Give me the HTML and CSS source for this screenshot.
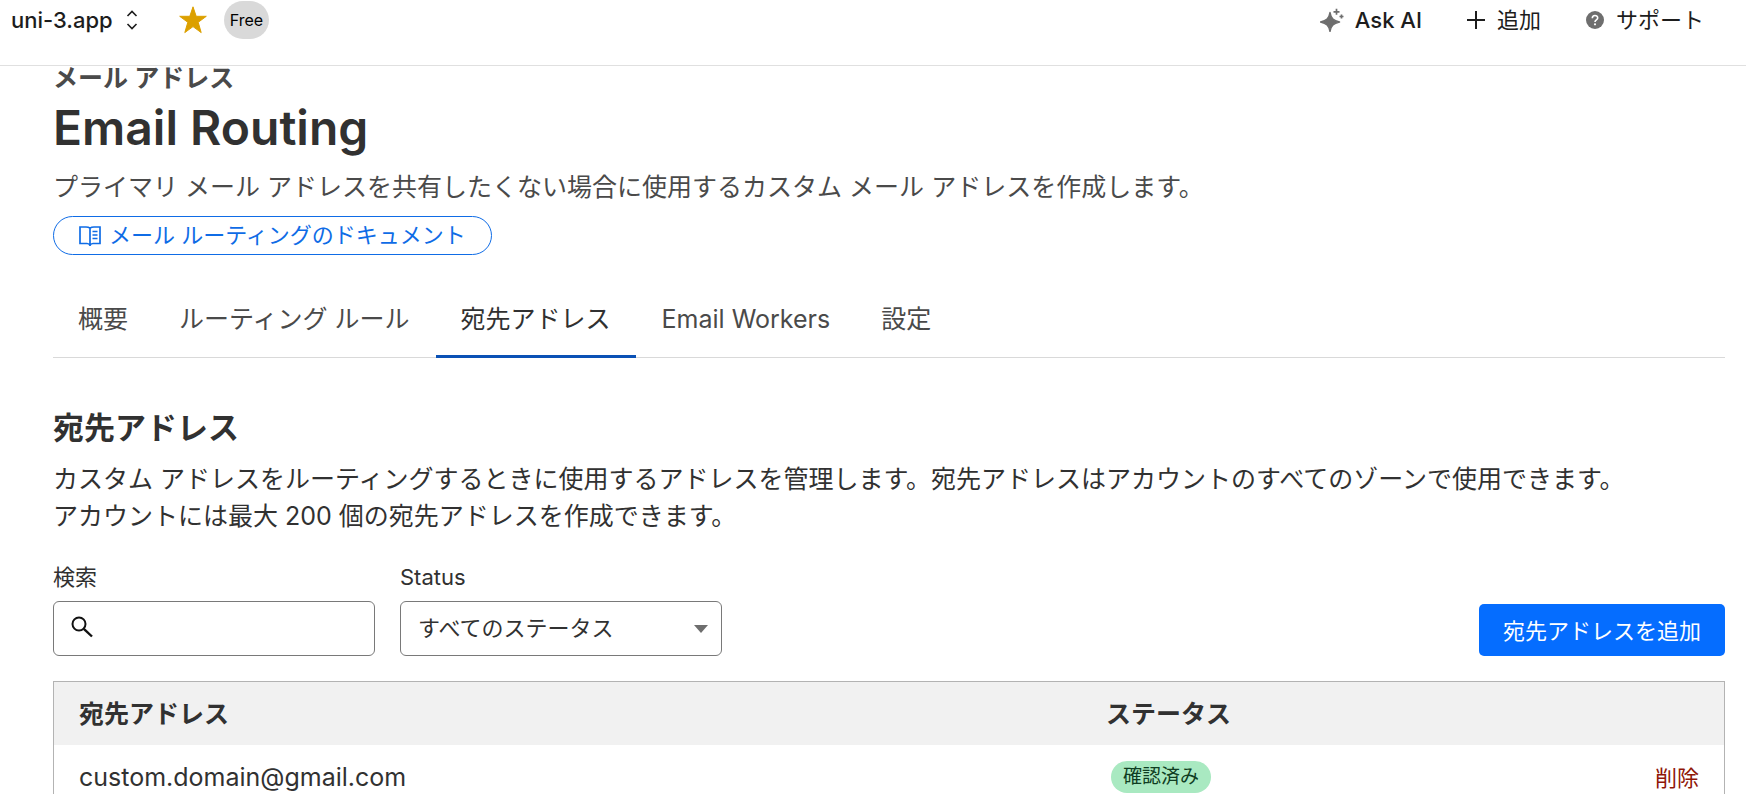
FILE: index.html
```html
<!DOCTYPE html>
<html lang="ja">
<head>
    <meta charset="UTF-8">
    <meta name="viewport" content="width=device-width, initial-scale=1.0">
    <title>Email Routing</title>
    <link rel="stylesheet" href="styles.css">
</head>
<body>
    <header class="topbar">
        <button class="site-switch" type="button">
            uni-3.app
            <svg width="12" height="20" viewBox="0 0 12 20" fill="none" stroke="#1d1d1d" stroke-width="1.6"><path d="M1.5 6 6 1.5 10.5 6M1.5 14 6 18.5 10.5 14"/></svg>
        </button>
        <button class="star" type="button" aria-label="Star">
            <svg width="28" height="28" viewBox="0 0 28 28" fill="#dca000"><path d="M14 .8 17.2 10.3H27.3L19.2 16.3 22.2 26.6 14 20.6 5.8 26.6 8.8 16.3.7 10.3H10.8Z" stroke="#dca000"/></svg>
        </button>
        <span class="plan">Free</span>

        <nav class="top-actions">
            <button class="ask" type="button">
                <svg width="24" height="24" viewBox="0 0 24 24" fill="#6e6e6e"><path d="M10 4.500C11 10.500 13.500 12.500 19.500 14 13.500 15.500 11 17.500 10 23.500 9 17.500 6.500 15.500.5 14 6.500 12.500 9 10.500 10 4.500Z" stroke="#6e6e6e" stroke-width="1.500" stroke-linejoin="round"/><path d="M16.500.8V6.800M13.500 3.800H19.500M21.500 6.500V10.500M19.500 8.500H23.500" stroke="#6e6e6e" stroke-width="1.700"/></svg>
                Ask AI
            </button>
            <button class="add" type="button">
                <svg width="18" height="18" viewBox="0 0 18 18" stroke="#1d1d1d" stroke-width="2"><path d="M9 0V18M0 9H18"/></svg>
                追加
            </button>
            <button class="support" type="button">
                <svg width="18" height="18" viewBox="0 0 18 18" fill="none"><circle cx="9" cy="9" r="9" fill="#6e6e6e"/><path d="M6.300 7.200C6.300 3.600 11.700 3.700 11.700 7 11.700 9 9 8.800 9 11" stroke="#fff" stroke-width="1.600"/><circle cx="9" cy="13.300" r="1.100" fill="#fff"/></svg>
                サポート
            </button>
        </nav>
    </header>

    <main class="page">
        <p class="eyebrow">メール アドレス</p>
        <h1>Email Routing</h1>
        <p class="lead">プライマリ メール アドレスを共有したくない場合に使用するカスタム メール アドレスを作成します。</p>
        <a class="docs-link" href="#">
            <svg width="22" height="20" viewBox="0 0 22 20" fill="none" stroke="currentColor" stroke-width="1.700"><path d="M11 2.200C9.500 1 8.500 1 7 1H1V17.500H8C9.500 17.500 10.500 18 11 19.500 11.500 18 12.500 17.500 14 17.500H21V1H15C13.500 1 12.500 1 11 2.200ZM11 2.200V19.500M13.500 5.500H18.500M13.500 9H18.500M13.500 12.500H18.500"/></svg>
            メール ルーティングのドキュメント
        </a>

        <nav class="tabs">
            <a href="#">概要</a>
            <a href="#">ルーティング ルール</a>
            <a class="active" href="#">宛先アドレス</a>
            <a href="#">Email Workers</a>
            <a href="#">設定</a>
        </nav>

        <section>
            <h2>宛先アドレス</h2>
            <p class="description">カスタム アドレスをルーティングするときに使用するアドレスを管理します。宛先アドレスはアカウントのすべてのゾーンで使用できます。<br>アカウントには最大 200 個の宛先アドレスを作成できます。</p>

            <div class="filters">
                <div class="field">
                    <label for="search">検索</label>
                    <div class="control">
                        <svg class="search-icon" width="22" height="22" viewBox="0 0 22 22" fill="none" stroke="#111"><circle cx="8" cy="8" r="6.500" stroke-width="2"/><path d="M12.800 12.800 21 20.500" stroke-width="2.400"/></svg>
                        <input type="text" id="search">
                    </div>
                </div>
                <div class="field">
                    <label for="status">Status</label>
                    <div class="control">
                        <select id="status">
                            <option>すべてのステータス</option>
                        </select>
                        <svg class="arrow" width="14" height="8" viewBox="0 0 14 8" fill="#6e6e6e"><path d="M0 0H14L7 8Z"/></svg>
                    </div>
                </div>
                <button class="primary" type="button">宛先アドレスを追加</button>
            </div>

            <table class="addresses">
                <thead>
                    <tr>
                        <th class="col-address">宛先アドレス</th>
                        <th>ステータス</th>
                        <th></th>
                    </tr>
                </thead>
                <tbody>
                    <tr>
                        <td>custom.domain@gmail.com</td>
                        <td><span class="badge">確認済み</span></td>
                        <td class="row-action"><button class="delete" type="button">削除</button></td>
                    </tr>
                </tbody>
            </table>
        </section>
    </main>
</body>
</html>
```
FILE: styles.css
```css
* {
    box-sizing: border-box;
}
body {
    font-family: Inter, "Noto Sans CJK JP", sans-serif;
    font-size: 25px;
    margin: 0;
    height: 100vh;
    overflow: hidden;
    color: #313131;
    background-color: #fff;
}
h1, h2, p {
    margin: 0;
}
button, input, select {
    font-family: inherit;
    font-size: 22px;
    color: inherit;
}
button {
    border: none;
    padding: 0;
    background: none;
    cursor: pointer;
}
svg {
    flex-shrink: 0;
}

/* Top bar */
.topbar {
    display: flex;
    align-items: center;
    height: 66px;
    padding: 0 42px 26px 11px;
    border-bottom: 1px solid #e0e0e0;
    color: #1d1d1d;
}
.topbar button {
    display: flex;
    align-items: center;
    line-height: 32px;
}
.topbar .site-switch {
    gap: 13px;
    font-weight: 500;
}
.star {
    margin-left: 41px;
}
.plan {
    margin-left: 17px;
    padding: 0 6px;
    border-radius: 19px;
    font-size: 16px;
    line-height: 38px;
    color: #000;
    background-color: #d9d9d9;
}
.top-actions {
    display: flex;
    gap: 45px;
    margin-left: auto;
}
.topbar .ask {
    gap: 11px;
    font-weight: 500;
}
.topbar .add,
.topbar .support {
    gap: 12px;
}

/* Page heading */
.page {
    padding: 0 21px 0 53px;
}
.eyebrow {
    font-weight: 600;
    line-height: 24px;
    color: #4a4a4a;
}
h1 {
    margin-top: 8px;
    font-size: 48px;
    font-weight: 600;
    line-height: 60px;
}
.lead {
    margin-top: 11px;
    line-height: 37px;
    color: #4a4a4a;
}
.docs-link {
    display: flex;
    align-items: center;
    gap: 8px;
    width: fit-content;
    margin-top: 10px;
    padding: 0 25px;
    border: 1px solid #0f6ce6;
    border-radius: 20px;
    font-size: 22px;
    line-height: 37px;
    color: #0f6ce6;
    text-decoration: none;
}

/* Tabs */
.tabs {
    display: flex;
    gap: 1px;
    margin-top: 25px;
    border-bottom: 1px solid #d9d9d9;
}
.tabs a {
    margin-bottom: -1px;
    padding: 20px 25px 17px;
    border-bottom: 3px solid transparent;
    line-height: 38px;
    color: #4a4a4a;
    text-decoration: none;
}
.tabs .active {
    border-color: #0a51b5;
    color: #313131;
}

h2 {
    margin-top: 50px;
    font-size: 31px;
    font-weight: 600;
    line-height: 40px;
}
.description {
    margin-top: 13px;
    line-height: 37px;
}

/* Filters */
.filters {
    display: flex;
    align-items: flex-end;
    gap: 25px;
    margin-top: 27px;
}
.field {
    width: 322px;
}
.field label {
    display: block;
    margin-bottom: 9px;
    font-size: 22px;
    line-height: 30px;
}
.control {
    position: relative;
}
.control input,
.control select {
    display: block;
    width: 100%;
    height: 55px;
    padding: 0 17px 2px;
    border: 1px solid #797979;
    border-radius: 6px;
    background-color: #fff;
    appearance: none;
}
.control input {
    padding-left: 50px;
}
.search-icon {
    position: absolute;
    top: 15px;
    left: 18px;
}
.arrow {
    position: absolute;
    top: 24px;
    right: 14px;
}
.primary {
    height: 52px;
    margin-left: auto;
    padding: 0 24px 2px;
    border-radius: 5px;
    color: #fff;
    background-color: #056dff;
}

/* Address table */
.addresses {
    width: 100%;
    margin-top: 25px;
    border: 1px solid #b3b3b3;
    border-spacing: 0;
}
.addresses th,
.addresses td {
    height: 63px;
    padding: 0 25px;
    text-align: left;
}
.addresses th {
    padding-bottom: 4px;
    font-weight: 600;
    background-color: #f1f1f1;
}
.addresses .col-address {
    width: 61.5%;
}
.badge {
    display: block;
    width: fit-content;
    margin-left: 5px;
    padding: 0 12px;
    border-radius: 16px;
    font-size: 19px;
    line-height: 32px;
    color: #0f3d22;
    background-color: #a9e9c1;
}
.addresses .row-action {
    padding-bottom: 2px;
    text-align: right;
}
.delete {
    color: #8f1608;
}
```
